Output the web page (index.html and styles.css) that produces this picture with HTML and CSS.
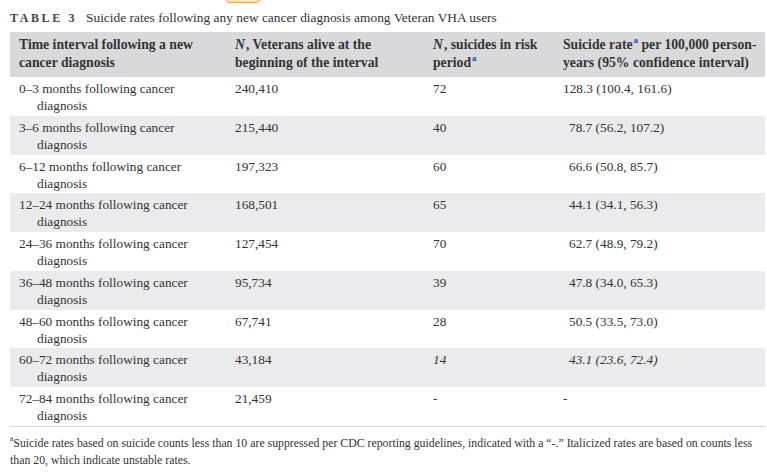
FILE: index.html
```html
<!DOCTYPE html>
<html>
<head>
<meta charset="utf-8">
<link rel="stylesheet" href="styles.css">
</head>
<body>
<div class="page">
  <div class="clip"><div class="pill"></div></div>
  <div class="caption"><span class="label">TABLE 3</span><span class="title">Suicide rates following any new cancer diagnosis among Veteran VHA users</span></div>
  <table class="data">
    <colgroup>
      <col class="c1"><col class="c2"><col class="c3"><col class="c4">
    </colgroup>
    <thead>
      <tr>
        <th>Time interval following a new cancer diagnosis</th>
        <th><i class="n">N</i>, Veterans alive at the beginning of the interval</th>
        <th><i class="n">N</i>, suicides in risk period<sup class="fn">a</sup></th>
        <th>Suicide rate<sup class="fn">a</sup> per 100,000 person-years (95% confidence interval)</th>
      </tr>
    </thead>
    <tbody>
      <tr><td class="hang">0–3 months following cancer diagnosis</td><td>240,410</td><td>72</td><td>128.3 (100.4, 161.6)</td></tr>
      <tr class="alt"><td class="hang">3–6 months following cancer diagnosis</td><td>215,440</td><td>40</td><td><span class="dp">78.7 (56.2, 107.2)</span></td></tr>
      <tr><td class="hang">6–12 months following cancer diagnosis</td><td>197,323</td><td>60</td><td><span class="dp">66.6 (50.8, 85.7)</span></td></tr>
      <tr class="alt"><td class="hang">12–24 months following cancer diagnosis</td><td>168,501</td><td>65</td><td><span class="dp">44.1 (34.1, 56.3)</span></td></tr>
      <tr><td class="hang">24–36 months following cancer diagnosis</td><td>127,454</td><td>70</td><td><span class="dp">62.7 (48.9, 79.2)</span></td></tr>
      <tr class="alt"><td class="hang">36–48 months following cancer diagnosis</td><td>95,734</td><td>39</td><td><span class="dp">47.8 (34.0, 65.3)</span></td></tr>
      <tr><td class="hang">48–60 months following cancer diagnosis</td><td>67,741</td><td>28</td><td><span class="dp">50.5 (33.5, 73.0)</span></td></tr>
      <tr class="alt"><td class="hang">60–72 months following cancer diagnosis</td><td>43,184</td><td><i>14</i></td><td><span class="dp"><i>43.1 (23.6, 72.4)</i></span></td></tr>
      <tr class="last"><td class="hang">72–84 months following cancer diagnosis</td><td>21,459</td><td>-</td><td>-</td></tr>
    </tbody>
  </table>
  <p class="note"><sup>a</sup>Suicide rates based on suicide counts less than 10 are suppressed per CDC reporting guidelines, indicated with a “-.” Italicized rates are based on counts less than 20, which indicate unstable rates.</p>
</div>
</body>
</html>
```

FILE: styles.css
```css
html, body {
  margin: 0;
  padding: 0;
  background: #ffffff;
}
.page {
  padding: 0 2px 0 10px;
  font-family: "Liberation Serif", "Times New Roman", serif;
  color: #333333;
}
.clip {
  height: 3px;
  overflow: hidden;
}
.pill {
  margin: -13px 0 0 215px;
  width: 34px;
  height: 14px;
  border: 1px solid #f0a24a;
  border-radius: 5px;
  background: #fde3c3;
}
.caption {
  display: flex;
  align-items: baseline;
  height: 29px;
  line-height: 29px;
}
.label {
  font-weight: bold;
  font-size: 12px;
  letter-spacing: 2.6px;
  color: #444444;
  width: 76px;
}
.title {
  font-size: 13.4px;
  color: #333333;
}
.data {
  width: 755px;
  border-collapse: collapse;
  table-layout: fixed;
}
.c1 { width: 216px; }
.c2 { width: 198px; }
.c3 { width: 130px; }
.c4 { width: 211px; }
.data th {
  background: #d9d9dc;
  text-align: left;
  vertical-align: top;
  font-size: 13.7px;
  line-height: 18px;
  font-weight: bold;
  color: #333333;
  padding: 4px 0 5px 9px;
  height: 36px;
}
.n {
  margin-right: 1px;
}
.data td {
  vertical-align: top;
  font-size: 13.3px;
  line-height: 17px;
  padding: 3px 9px 1.75px 9px;
  color: #333333;
}
.data tr.alt td {
  background: #ebebee;
}
.data tr.last td {
  border-bottom: 1px solid #d6d6d6;
}
.data td.hang {
  padding-left: 27px;
  text-indent: -18px;
}
.dp {
  padding-left: 6px;
}
.fn {
  color: #2a48c8;
  font-size: 9px;
  line-height: 1;
  vertical-align: top;
  margin-left: 1px;
}
.note {
  margin: 8px 0 0 0;
  font-size: 11.8px;
  line-height: 17px;
  color: #333333;
}
.note sup {
  font-size: 7.5px;
  line-height: 1;
  vertical-align: top;
}
```
